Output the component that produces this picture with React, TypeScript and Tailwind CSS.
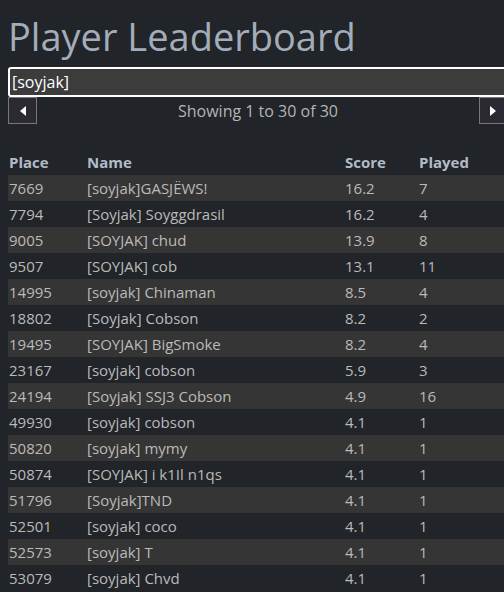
import { useState } from 'react';

const rows = [
  { place: 7669, name: '[soyjak]GASJËWS!', score: '16.2', played: 7 },
  { place: 7794, name: '[Soyjak] Soyggdrasil', score: '16.2', played: 4 },
  { place: 9005, name: '[SOYJAK] chud', score: '13.9', played: 8 },
  { place: 9507, name: '[SOYJAK] cob', score: '13.1', played: 11 },
  { place: 14995, name: '[soyjak] Chinaman', score: '8.5', played: 4 },
  { place: 18802, name: '[Soyjak] Cobson', score: '8.2', played: 2 },
  { place: 19495, name: '[SOYJAK] BigSmoke', score: '8.2', played: 4 },
  { place: 23167, name: '[soyjak] cobson', score: '5.9', played: 3 },
  { place: 24194, name: '[Soyjak] SSJ3 Cobson', score: '4.9', played: 16 },
  { place: 49930, name: '[soyjak] cobson', score: '4.1', played: 1 },
  { place: 50820, name: '[soyjak] mymy', score: '4.1', played: 1 },
  { place: 50874, name: '[SOYJAK] i k1Il n1qs', score: '4.1', played: 1 },
  { place: 51796, name: '[Soyjak]TND', score: '4.1', played: 1 },
  { place: 52501, name: '[soyjak] coco', score: '4.1', played: 1 },
  { place: 52573, name: '[soyjak] T', score: '4.1', played: 1 },
  { place: 53079, name: '[soyjak] Chvd', score: '4.1', played: 1 },
];

function Arrow({ dir }: { dir: 'left' | 'right' }) {
  return (
    <svg width="6" height="10" viewBox="0 0 6 10">
      {dir === 'left' ? <path d="M6 0 L0 5 L6 10 Z" fill="#fff" /> : <path d="M0 0 L6 5 L0 10 Z" fill="#fff" />}
    </svg>
  );
}

export default function App() {
  const [query, setQuery] = useState('[soyjak]');

  return (
    <div className="min-h-screen w-full overflow-hidden bg-[#212428] font-['Segoe_UI','Open_Sans',sans-serif]">
      <div className="ml-2 w-[500px] pt-[10px]">
        <h1 className="text-[38px] leading-[52px] text-[#a3adba]">Player Leaderboard</h1>

        <input
          className="mt-[5px] block h-[30px] w-full rounded-[3px] border-2 border-white bg-[#3c3c3c] px-[2px] text-[16px] text-white outline-none"
          value={query}
          onChange={(event) => setQuery(event.target.value)}
        />

        <div className="flex items-center justify-between">
          <button
            type="button"
            className="flex h-[27px] w-[29px] items-center justify-center border border-[#777] bg-[#2b2a33]"
          >
            <Arrow dir="left" />
          </button>
          <span className="text-[16px] text-[#b4b4b4]">Showing 1 to 30 of 30</span>
          <button
            type="button"
            className="flex h-[27px] w-[29px] items-center justify-center border border-[#777] bg-[#2b2a33]"
          >
            <Arrow dir="right" />
          </button>
        </div>

        <table className="mt-[25px] w-full border-collapse text-left text-[15px]">
          <thead>
            <tr className="h-[26px] text-[#b3bbc7]">
              <th className="w-[79px] pl-[1px] font-bold">Place</th>
              <th className="w-[258px] font-bold">Name</th>
              <th className="w-[74px] font-bold">Score</th>
              <th className="font-bold">Played</th>
            </tr>
          </thead>
          <tbody>
            {rows.map((row, i) => (
              <tr key={row.place} className={`h-[26px] text-[#bababa] ${i % 2 === 0 ? 'bg-[#353535]' : ''}`}>
                <td className="pl-[1px]">{row.place}</td>
                <td>{row.name}</td>
                <td>{row.score}</td>
                <td>{row.played}</td>
              </tr>
            ))}
          </tbody>
        </table>
      </div>
    </div>
  );
}
